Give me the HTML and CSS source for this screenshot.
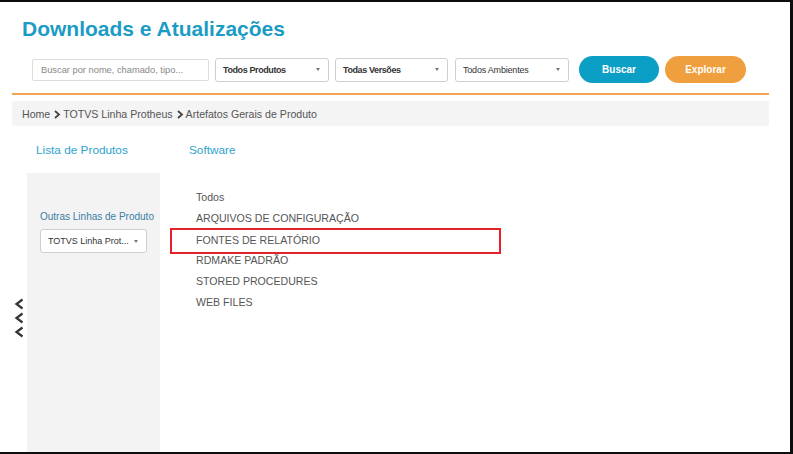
FILE: index.html
```html
<!DOCTYPE html>
<html lang="pt">
<head>
<meta charset="utf-8">
<title>Downloads e Atualizações</title>
<link rel="stylesheet" href="styles.css">
</head>
<body>
<div class="frame">
  <header class="top">
    <h1 class="title">Downloads e Atualizações</h1>
    <div class="filters">
      <div class="search">Buscar por nome, chamado, tipo...</div>
      <div class="select s1"><span>Todos Produtos</span><i class="arrow"></i></div>
      <div class="select s2"><span>Todas Versões</span><i class="arrow"></i></div>
      <div class="select s3"><span>Todos Ambientes</span><i class="arrow"></i></div>
      <button class="btn btn-blue">Buscar</button>
      <button class="btn btn-orange">Explorar</button>
    </div>
  </header>
  <div class="rule"></div>
  <nav class="crumbs">
    <span>Home</span>
    <svg class="sep" width="8" height="9" viewBox="0 0 8 9"><path d="M2 1 L6 4.5 L2 8" fill="none" stroke="#444" stroke-width="1.8"/></svg>
    <span>TOTVS Linha Protheus</span>
    <svg class="sep" width="8" height="9" viewBox="0 0 8 9"><path d="M2 1 L6 4.5 L2 8" fill="none" stroke="#444" stroke-width="1.8"/></svg>
    <span>Artefatos Gerais de Produto</span>
  </nav>
  <div class="heads">
    <div class="head h-left">Lista de Produtos</div>
    <div class="head h-right">Software</div>
  </div>
  <div class="main">
    <div class="gutter">
      <svg class="chev" width="10" height="12" viewBox="0 0 10 12"><path d="M8.5 1.5 L2.5 6 L8.5 10.5" fill="none" stroke="#333" stroke-width="2.2"/></svg>
      <svg class="chev" width="10" height="12" viewBox="0 0 10 12"><path d="M8.5 1.5 L2.5 6 L8.5 10.5" fill="none" stroke="#333" stroke-width="2.2"/></svg>
      <svg class="chev" width="10" height="12" viewBox="0 0 10 12"><path d="M8.5 1.5 L2.5 6 L8.5 10.5" fill="none" stroke="#333" stroke-width="2.2"/></svg>
    </div>
    <aside class="side">
      <div class="side-label">Outras Linhas de Produto</div>
      <div class="select side-select"><span>TOTVS Linha Prot...</span><i class="arrow"></i></div>
    </aside>
    <ul class="list">
      <li>Todos</li>
      <li>ARQUIVOS DE CONFIGURAÇÃO</li>
      <li class="hl">FONTES DE RELATÓRIO</li>
      <li>RDMAKE PADRÃO</li>
      <li>STORED PROCEDURES</li>
      <li>WEB FILES</li>
    </ul>
  </div>
</div>
</body>
</html>
```
FILE: styles.css
```css
html, body {
  margin: 0;
  padding: 0;
  background: #000;
}
body {
  width: 793px;
  height: 454px;
  overflow: hidden;
  font-family: "Liberation Sans", Arial, sans-serif;
}
.frame {
  box-sizing: border-box;
  width: 793px;
  height: 454px;
  border-top: 2px solid #0d0d0d;
  border-right: 3px solid #0d0d0d;
  border-bottom: 2px solid #0d0d0d;
  background: #fff;
  display: flex;
  flex-direction: column;
}
.top {
  padding: 0 0 0 22px;
}
.title {
  margin: 13px 0 0 0;
  font-size: 21px;
  line-height: 27px;
  font-weight: bold;
  color: #1b9cc5;
}
.filters {
  display: flex;
  align-items: center;
  margin: 14px 0 0 10px;
  height: 27px;
}
.search {
  box-sizing: border-box;
  width: 177px;
  height: 22px;
  border: 1px solid #ddd;
  border-radius: 2px;
  font-size: 9.3px;
  line-height: 20px;
  color: #888;
  padding-left: 8px;
  margin-right: 6px;
}
.select {
  box-sizing: border-box;
  height: 24px;
  border: 1px solid #cfcfcf;
  border-radius: 3px;
  display: flex;
  align-items: center;
  justify-content: space-between;
  padding: 0 8px 0 7px;
  font-size: 9px;
  font-weight: bold;
  color: #333;
  background: #fff;
}
.s1, .s2 { letter-spacing: -0.4px; }
.s1 { width: 114px; margin-right: 6px; }
.s2 { width: 113px; margin-right: 7px; }
.s3 { width: 114px; margin-right: 10px; font-weight: normal; color: #333; letter-spacing: -0.2px; }
.arrow {
  width: 0;
  height: 0;
  border-left: 2.5px solid transparent;
  border-right: 2.5px solid transparent;
  border-top: 3.5px solid #777;
}
.btn {
  height: 27px;
  border: 0;
  border-radius: 14px;
  color: #fff;
  font-family: "Liberation Sans", Arial, sans-serif;
  font-size: 10px;
  font-weight: bold;
  padding: 0;
}
.btn-blue { width: 80px; background: #0c9fc6; margin-right: 6px; }
.btn-orange { width: 81px; background: #ef9f3d; }
.rule {
  margin: 10px 21px 0 12px;
  height: 0;
  border-top: 2px solid #f2a555;
}
.crumbs {
  margin: 6px 21px 0 12px;
  height: 25px;
  background: #f4f4f4;
  border-radius: 2px;
  display: flex;
  align-items: center;
  padding-left: 10px;
  font-size: 10.6px;
  color: #555;
}
.crumbs .sep { margin: 1px 2px 0 3px; }
.heads {
  display: flex;
  height: 47px;
  align-items: center;
  font-size: 11.8px;
  color: #2ea2cc;
}
.h-left { margin-left: 36px; width: 153px; }
.main {
  flex: 1;
  display: flex;
}
.gutter {
  width: 27px;
  display: flex;
  flex-direction: column;
  align-items: flex-start;
  padding: 125px 0 0 14px;
  box-sizing: border-box;
}
.chev { display: block; margin: 0 0 2px 0; }
.side {
  width: 133px;
  background: #f3f3f3;
  padding: 38px 0 0 13px;
  box-sizing: border-box;
}
.side-label {
  font-size: 10px;
  color: #3a7ea6;
  margin-bottom: 7px;
}
.side-select {
  width: 107px;
  height: 24px;
  font-weight: normal;
  color: #333;
  font-size: 9px;
  padding-left: 7px;
}
.list {
  list-style: none;
  margin: 0;
  padding: 16px 0 0 36px;
  font-size: 10.6px;
  color: #555;
}
.list li {
  height: 21px;
  line-height: 17px;
}
.list li.hl {
  box-sizing: border-box;
  width: 331px;
  height: 26px;
  margin: 0 0 -5px -26px;
  padding-left: 24px;
  position: relative;
  top: -3px;
  line-height: 20px;
  border: 2px solid #e3222a;
}
```
